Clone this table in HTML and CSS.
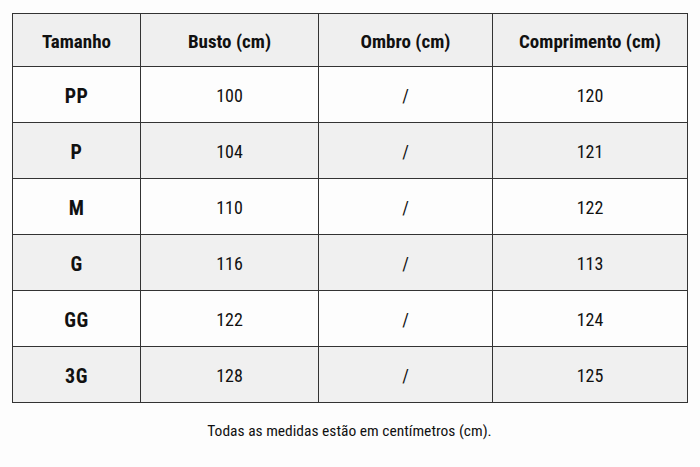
FILE: index.html
```html
<!DOCTYPE html>
<html lang="pt">
<head>
<meta charset="utf-8">
<title>Tabela de medidas</title>
<link rel="stylesheet" href="styles.css">
</head>
<body>
<main class="page">
  <table class="sizes">
    <colgroup>
      <col class="c1"><col class="c2"><col class="c3"><col class="c4">
    </colgroup>
    <thead>
      <tr><th>Tamanho</th><th>Busto (cm)</th><th>Ombro (cm)</th><th>Comprimento (cm)</th></tr>
    </thead>
    <tbody>
      <tr><th>PP</th><td>100</td><td>/</td><td>120</td></tr>
      <tr class="alt"><th>P</th><td>104</td><td>/</td><td>121</td></tr>
      <tr><th>M</th><td>110</td><td>/</td><td>122</td></tr>
      <tr class="alt"><th>G</th><td>116</td><td>/</td><td>113</td></tr>
      <tr><th>GG</th><td>122</td><td>/</td><td>124</td></tr>
      <tr class="alt"><th>3G</th><td>128</td><td>/</td><td>125</td></tr>
    </tbody>
  </table>
  <p class="note">Todas as medidas estão em centímetros (cm).</p>
</main>
</body>
</html>
```
FILE: styles.css
```css
html, body {
  margin: 0;
  padding: 0;
  background: #fdfdfd;
}
body {
  font-family: "Roboto Condensed", "Noto Sans", sans-serif;
  color: #111;
}
.page {
  padding: 13px 13px 0 12px;
}
.sizes {
  border-collapse: collapse;
  width: 675px;
  table-layout: fixed;
}
.c1 { width: 128px; }
.c2 { width: 178px; }
.c3 { width: 174px; }
.c4 { width: 195px; }
.sizes th, .sizes td {
  border: 1px solid #333;
  text-align: center;
  padding: 2px 0 0 0;
}
.sizes thead th {
  height: 50px;
  background: #efefef;
  font-size: 19px;
  font-weight: 700;
}
.sizes tbody th, .sizes tbody td {
  height: 53px;
  background: #fdfdfd;
}
.sizes tbody th {
  font-size: 20px;
  font-weight: 700;
  letter-spacing: 0.5px;
}
.sizes tbody td {
  font-size: 18px;
  font-weight: 400;
}
.sizes tbody tr.alt th, .sizes tbody tr.alt td {
  background: #f0f0f0;
}
.note {
  margin: 19px 0 0 0;
  text-align: center;
  font-size: 15.5px;
  width: 675px;
}
```
